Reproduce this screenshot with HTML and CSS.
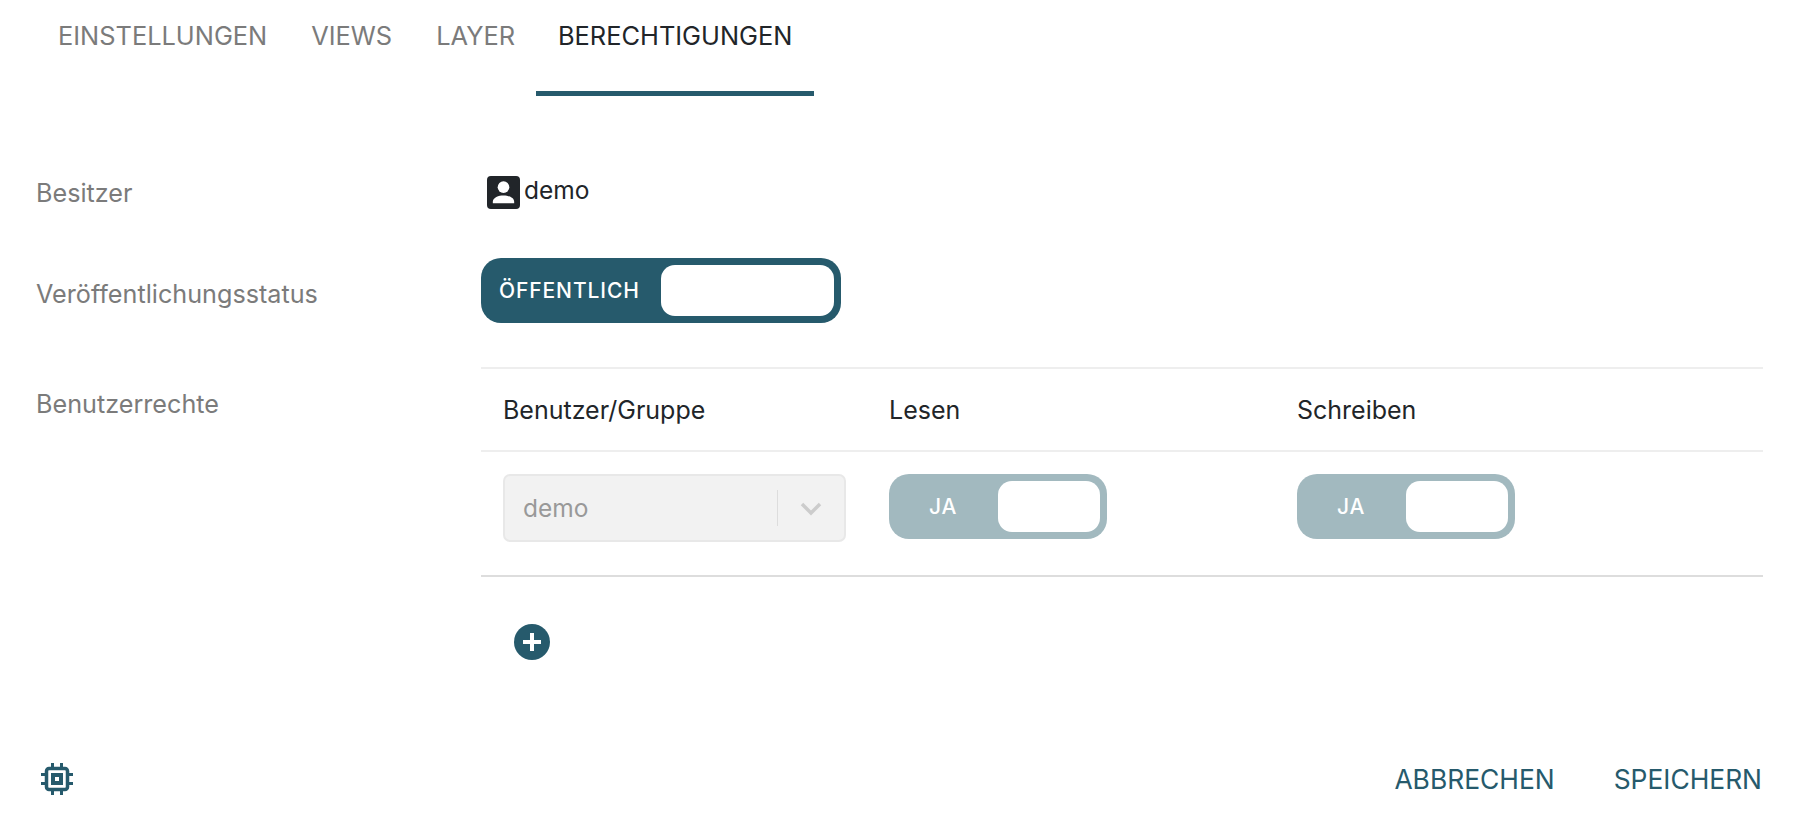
FILE: index.html
```html
<!DOCTYPE html>
<html lang="de">
<head>
    <meta charset="UTF-8">
    <meta name="viewport" content="width=device-width, initial-scale=1.0">
    <title>Berechtigungen</title>
    <link rel="stylesheet" href="styles.css">
</head>
<body>
    <div class="page">
        <nav class="tabs">
            <a class="tab">EINSTELLUNGEN</a>
            <a class="tab">VIEWS</a>
            <a class="tab">LAYER</a>
            <a class="tab active">BERECHTIGUNGEN</a>
        </nav>

        <div class="form">
            <div class="row owner-row">
                <div class="label">Besitzer</div>
                <div class="owner">
                    <svg class="owner-icon" viewBox="0 0 34 34">
                        <rect width="34" height="34" rx="4" fill="#212529"/>
                        <circle cx="17" cy="11.500" r="6" fill="#fff"/>
                        <path d="M6 28v-1.500C6 22 12 20 17 20s11 2 11 6.500V28z" fill="#fff"/>
                    </svg>
                    <span class="owner-name">demo</span>
                </div>
            </div>

            <div class="row status-row">
                <div class="label">Veröffentlichungsstatus</div>
                <div class="toggle toggle-wide">
                    <span class="toggle-text">ÖFFENTLICH</span>
                    <span class="knob"></span>
                </div>
            </div>

            <div class="row rights-row">
                <div class="label rights-label">Benutzerrechte</div>
                <div class="rights">
                    <div class="rights-head">
                        <div>Benutzer/Gruppe</div>
                        <div>Lesen</div>
                        <div>Schreiben</div>
                    </div>
                    <div class="rights-line">
                        <div class="select">
                            <span class="select-value">demo</span>
                            <span class="select-sep"></span>
                            <svg class="select-arrow" viewBox="0 0 22 22">
                                <path d="M2 6l9 9 9-9" fill="none" stroke="#ccc" stroke-width="3.500"/>
                            </svg>
                        </div>
                        <div class="toggle toggle-small">
                            <span class="toggle-text">JA</span>
                            <span class="knob"></span>
                        </div>
                        <div class="toggle toggle-small">
                            <span class="toggle-text">JA</span>
                            <span class="knob"></span>
                        </div>
                    </div>
                    <button class="add-btn">
                        <svg viewBox="0 0 36 36" width="36" height="36">
                            <circle cx="18" cy="18" r="18" fill="#265a6c"/>
                            <path d="M18 9v18M9 18h18" stroke="#fff" stroke-width="4"/>
                        </svg>
                    </button>
                </div>
            </div>
        </div>

        <footer class="footer">
            <svg class="chip" viewBox="0 0 32 32">
                <path d="M11.500 0v6M20.500 0v6M11.500 26v6M20.500 26v6M0 11.500h6M0 20.500h6M26 11.500h6M26 20.500h6" stroke="#265a6c" stroke-width="3" fill="none"/>
                <rect x="5.500" y="5.500" width="21" height="21" rx="2.500" fill="#fff" stroke="#265a6c" stroke-width="3.500"/>
                <rect x="12" y="12" width="8" height="8" fill="none" stroke="#265a6c" stroke-width="4"/>
            </svg>
            <div class="actions">
                <a class="action">ABBRECHEN</a>
                <a class="action">SPEICHERN</a>
            </div>
        </footer>
    </div>
</body>
</html>
```

FILE: styles.css
```css
body {
    font-family: Inter, 'Noto Sans', sans-serif;
    margin: 0;
    padding: 0;
    color: #212529;
    background-color: #fff;
}

.page {
    display: flex;
    flex-direction: column;
    height: 820px;
    overflow: hidden;
}

.tabs {
    display: flex;
    padding-left: 36px;
    height: 96px;
}

.tab {
    padding: 21px 22px 0;
    font-size: 25.400px;
    line-height: 30px;
    color: #7b7b7b;
    box-sizing: border-box;
}

.tab.active {
    color: #212529;
    border-bottom: 5px solid #265a6c;
    margin-left: -1px;
}

.form {
    padding: 0 37px 0 36px;
}

.row {
    display: flex;
}

.label {
    width: 445px;
    flex-shrink: 0;
    font-size: 25.200px;
    line-height: 30px;
    color: #7b7b7b;
}

.owner-row {
    padding-top: 80px;
    height: 51px;
}

.owner-row .label {
    padding-top: 2px;
}

.owner {
    display: flex;
    align-items: center;
    gap: 4px;
    font-size: 24.500px;
    height: 33px;
    margin-left: 6px;
}

.owner-name {
    margin-bottom: 5px;
}

.owner-icon {
    width: 33px;
    height: 33px;
}

.status-row {
    align-items: center;
    margin-top: 31px;
}

.status-row .label {
    padding-top: 6px;
}

.toggle {
    display: flex;
    align-items: center;
    justify-content: space-between;
    box-sizing: border-box;
    border-radius: 20px;
    padding: 7px;
    color: #fff;
}

.toggle-wide {
    width: 360px;
    height: 65px;
    background-color: #265a6c;
}

.toggle-small {
    width: 218px;
    height: 65px;
    background-color: #a2b9bf;
}

.toggle-text {
    font-size: 21px;
    font-weight: 500;
    letter-spacing: 0.900px;
}

.toggle-wide .toggle-text {
    padding-left: 11px;
}

.toggle-small .toggle-text {
    padding-left: 33px;
}

.knob {
    background-color: #fff;
    border-radius: 14px;
    height: 51px;
}

.toggle-wide .knob {
    width: 173px;
}

.toggle-small .knob {
    width: 102px;
}

.rights-row {
    margin-top: 44px;
}

.rights-label {
    padding-top: 22px;
}

.rights {
    flex: 1;
    border-top: 2px solid #eee;
}

.rights-head {
    display: grid;
    grid-template-columns: 386px 408px 1fr;
    padding-left: 22px;
    height: 81px;
    align-items: center;
    font-size: 25px;
    border-bottom: 2px solid #eee;
}

.rights-line {
    display: grid;
    grid-template-columns: 386px 408px 1fr;
    padding: 22px 0 33px 22px;
    border-bottom: 2px solid #ddd;
}

.select {
    display: flex;
    align-items: center;
    width: 343px;
    height: 68px;
    box-sizing: border-box;
    background-color: #f2f2f2;
    border: 2px solid #e8e8e8;
    border-radius: 7px;
    padding-left: 18px;
}

.select-value {
    flex: 1;
    font-size: 24.500px;
    color: #999;
}

.select-sep {
    width: 1px;
    height: 36px;
    background-color: #ddd;
}

.select-arrow {
    width: 22px;
    height: 22px;
    margin: 2px 22px 0 22px;
}

.add-btn {
    display: block;
    border: none;
    background: none;
    padding: 0;
    margin: 47px 0 0 33px;
    height: 36px;
}

.footer {
    display: flex;
    align-items: center;
    justify-content: space-between;
    margin-top: auto;
    padding: 0 38px 25px 41px;
}

.chip {
    width: 32px;
    height: 32px;
}

.actions {
    display: flex;
    gap: 59px;
}

.action {
    font-size: 26.400px;
    color: #265a6c;
}
```
